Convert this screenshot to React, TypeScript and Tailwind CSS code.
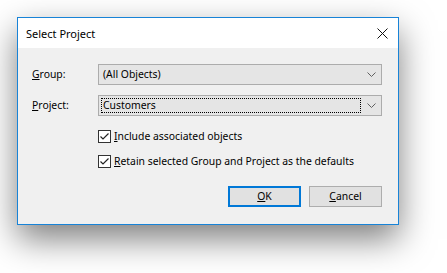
import React from 'react';

const font = { fontFamily: '"Noto Sans", sans-serif' };

function Chevron() {
  return (
    <svg width="9" height="5" viewBox="0 0 9 5" className="text-[#606060]">
      <path d="M0.5 0.5 L4.5 4.5 L8.5 0.5" fill="none" stroke="currentColor" strokeWidth="1" />
    </svg>
  );
}

function Combo({ value, focused }: { value: string; focused?: boolean }) {
  return (
    <div className="flex items-center h-[21px] w-[284px] bg-[#e5e5e5] border border-[#acacac]">
      <div className="flex-1 h-full p-[2px]">
        <div className={`h-full flex items-center pl-[1px] ${focused ? 'border border-dotted border-black' : 'border border-transparent'}`}>
          {value}
        </div>
      </div>
      <div className="w-[18px] h-full flex items-center justify-center pr-[1px]">
        <Chevron />
      </div>
    </div>
  );
}

function Check({ children }: { children: React.ReactNode }) {
  return (
    <div className="flex items-center gap-[3px] h-[13px]">
      <div className="w-[13px] h-[13px] border border-[#333] bg-white flex items-center justify-center">
        <svg width="11" height="11" viewBox="0 0 11 11">
          <path d="M1.5 5.5 L4 8 L9.5 2.5" fill="none" stroke="#222" strokeWidth="1.2" />
        </svg>
      </div>
      <span>{children}</span>
    </div>
  );
}

export default function App() {
  return (
    <div className="bg-white w-[447px] h-[273px] pt-[17px] pl-[17px] text-[10.4px] text-black" style={font}>
      <div className="w-[382px] h-[208px] border border-[#1883d7] bg-[#f0f0f0] flex flex-col shadow-[0_14px_32px_rgba(0,0,0,0.5)]">
        <div className="h-[30px] bg-white flex items-center justify-between pl-[8px] pr-[10px]">
          <span className="text-[11px] leading-none">Select Project</span>
          <svg width="11" height="11" viewBox="0 0 11 11">
            <path d="M0.5 0.5 L10.5 10.5 M10.5 0.5 L0.5 10.5" stroke="#111" strokeWidth="1" />
          </svg>
        </div>
        <div className="flex flex-col pt-[16px] pl-[14px]">
          <div className="flex items-center">
            <span className="w-[66px]"><u>G</u>roup:</span>
            <Combo value="(All Objects)" />
          </div>
          <div className="flex items-center mt-[10px]">
            <span className="w-[66px]"><u>P</u>roject:</span>
            <Combo value="Customers" focused />
          </div>
          <div className="flex flex-col pl-[66px] mt-[14px] gap-[12px]">
            <Check><u>I</u>nclude associated objects</Check>
            <Check><u>R</u>etain selected Group and Project as the defaults</Check>
          </div>
          <div className="flex justify-end gap-[8px] pr-[16px] mt-[18px]">
            <button className="w-[73px] h-[21px] bg-[#e1e1e1] border-2 border-[#0078d7] flex items-center justify-center">
              <span><u>O</u>K</span>
            </button>
            <button className="w-[73px] h-[21px] bg-[#e1e1e1] border border-[#adadad] flex items-center justify-center">
              <span><u>C</u>ancel</span>
            </button>
          </div>
        </div>
      </div>
    </div>
  );
}
